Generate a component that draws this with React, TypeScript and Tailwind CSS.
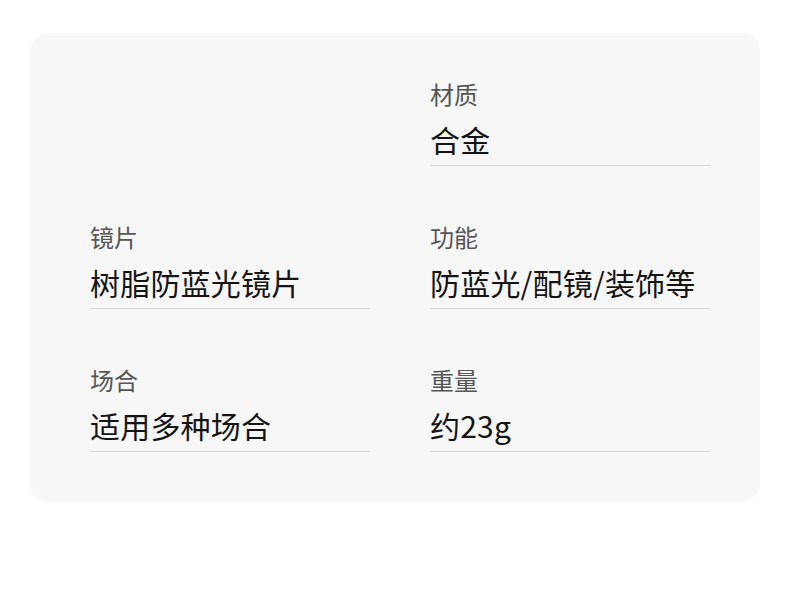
const specs = [
    null,
    { label: "材质", value: "合金" },
    { label: "镜片", value: "树脂防蓝光镜片" },
    { label: "功能", value: "防蓝光/配镜/装饰等" },
    { label: "场合", value: "适用多种场合" },
    { label: "重量", value: "约23g" },
]

export default function App() {
    return (
        <div className="w-[790px] h-[595px] bg-white pt-[33px] pl-[30px]" style={{ fontFamily: '"Noto Sans CJK SC", "Noto Sans", sans-serif' }}>
            <div className="w-[730px] rounded-[18px] bg-[#f7f7f7] pt-[45px] pb-[50px] pl-[60px] pr-[50px]">
                <div className="grid grid-cols-[280px_280px] gap-x-[60px] gap-y-[55px]">
                    {
                        specs.map((item, i) => {
                            if (!item) return <div key={i}></div>
                            return <div key={i} className="flex flex-col border-b border-[#d6d6d6] pb-[8px]">
                                <p className="text-[24px] leading-[32px] text-[#555555]">{item.label}</p>
                                <p className="mt-[11px] text-[30px] leading-[36px] text-[#141414] tracking-[0.2px]">{item.value}</p>
                            </div>
                        })
                    }
                </div>
            </div>
        </div>
    )
}
